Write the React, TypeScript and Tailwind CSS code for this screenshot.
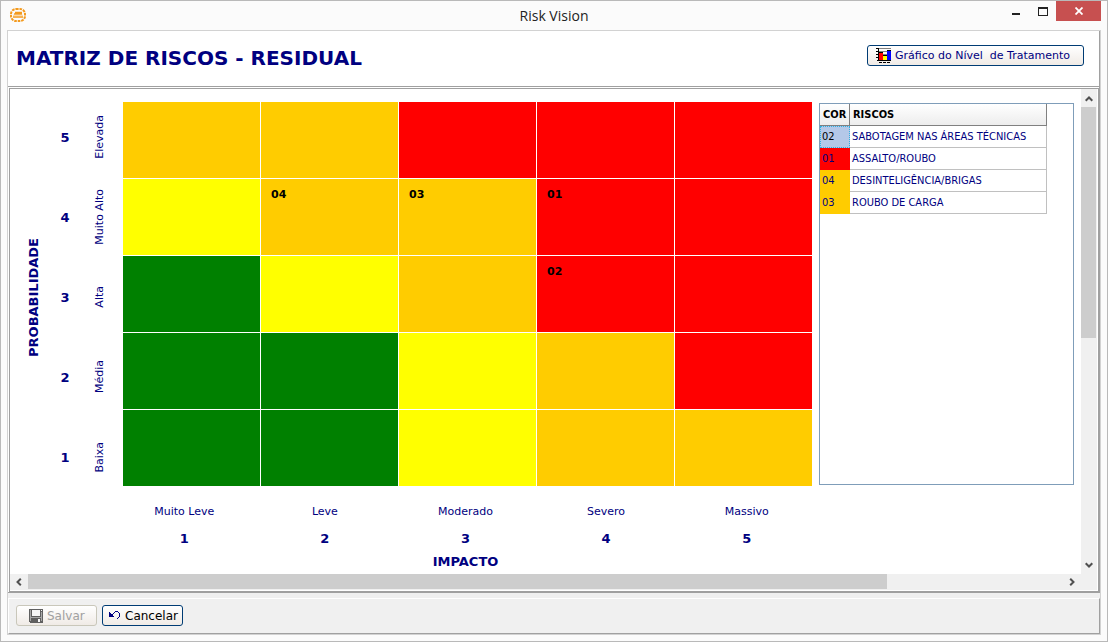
import { useState } from "react";
import clsx from "clsx";

// --------
// Data
// --------

type Level = "green" | "yellow" | "amber" | "red";

const colors: Record<Level, string> = {
  green: "bg-[#008000]",
  yellow: "bg-[#ffff00]",
  amber: "bg-[#ffcc00]",
  red: "bg-[#ff0000]",
};

const matrix: { level: Level; risk?: string }[][] = [
  [{ level: "amber" }, { level: "amber" }, { level: "red" }, { level: "red" }, { level: "red" }],
  [
    { level: "yellow" },
    { level: "amber", risk: "04" },
    { level: "amber", risk: "03" },
    { level: "red", risk: "01" },
    { level: "red" },
  ],
  [{ level: "green" }, { level: "yellow" }, { level: "amber" }, { level: "red", risk: "02" }, { level: "red" }],
  [{ level: "green" }, { level: "green" }, { level: "yellow" }, { level: "amber" }, { level: "red" }],
  [{ level: "green" }, { level: "green" }, { level: "yellow" }, { level: "amber" }, { level: "amber" }],
];

const probability = [
  { value: 5, label: "Elevada" },
  { value: 4, label: "Muito Alto" },
  { value: 3, label: "Alta" },
  { value: 2, label: "Média" },
  { value: 1, label: "Baixa" },
];

const impact = [
  { value: 1, label: "Muito Leve" },
  { value: 2, label: "Leve" },
  { value: 3, label: "Moderado" },
  { value: 4, label: "Severo" },
  { value: 5, label: "Massivo" },
];

const risks: { id: string; name: string; level: Level }[] = [
  { id: "02", name: "SABOTAGEM NAS ÁREAS TÉCNICAS", level: "red" },
  { id: "01", name: "ASSALTO/ROUBO", level: "red" },
  { id: "04", name: "DESINTELIGÊNCIA/BRIGAS", level: "amber" },
  { id: "03", name: "ROUBO DE CARGA", level: "amber" },
];

// --------
// Icons
// --------

const Logo = () => (
  <svg width="16" height="14" viewBox="0 0 16 14" fill="none" stroke="#f39a1e">
    <rect x="1" y="1" width="14" height="12" rx="5" strokeWidth="2" strokeDasharray="2.6 0.9" />
    <path d="M5 4.5h7M4 6h8M3 9h10" strokeWidth="1.4" />
    <path d="M3 7.3h10" stroke="#f9c57c" strokeWidth="0.8" />
  </svg>
);

const ChartIcon = () => (
  <svg width="15" height="15" viewBox="0 0 15 15" shapeRendering="crispEdges">
    <path fill="#808080" d="M2 0h13v1H2zM2 3h13v1H2zM2 6h13v1H2zM2 9h13v1H2z" />
    <path fill="#000" d="M0 0h3v1H0zM0 3h3v1H0zM0 6h3v1H0zM0 9h3v1H0zM1 12h14v1H1zM2 0h1v13H2zM3 14h3v1H3zM7 14h3v1H7zM11 14h3v1h-3z" />
    <path fill="#000" d="M3 4h4v1H3zM7 7h4v1H7zM11 2h4v1h-4z" />
    <path fill="#ff0000" d="M3 5h4v7H3z" />
    <path fill="#ffff00" d="M7 8h4v4H7z" />
    <path fill="#0000ff" d="M11 3h4v9h-4z" />
  </svg>
);

const SaveIcon = () => (
  <svg width="14" height="14" viewBox="0 0 14 14" shapeRendering="crispEdges">
    <path fill="#606060" d="M0 0h14v14H1l-1-1z" />
    <path fill="#f8f8f8" d="M3 1h8v6H3zM12 1h1v1h-1z" />
    <path fill="#a8a8a8" d="M1 1h1v11H1zM12 3h1v9h-1zM2 8h10v1H2z" />
    <path fill="#f8f8f8" d="M9 10h2v3H9z" />
  </svg>
);

const UndoIcon = () => (
  <svg width="12" height="9" viewBox="0 0 12 9" shapeRendering="crispEdges" fill="#000080">
    <path d="M0 1h1v5H0zM1 2h1v4H1zM2 3h1v3H2zM3 4h1v2H3zM4 5h1v1H4zM3 3h1v1H3zM4 2h1v1H4zM5 1h1v1H5zM6 0h3v1H6zM9 1h1v1H9zM10 2h1v4h-1zM9 6h1v1H9zM8 7h1v1H8z" />
  </svg>
);

const Chevron = ({ className }: { className?: string }) => (
  <svg width="8" height="8" viewBox="0 0 8 8" className={className} fill="none" stroke="#505050" strokeWidth="2">
    <path d="M0.7 5.8 4 2.5 7.3 5.8" />
  </svg>
);

// --------
// Window parts
// --------

const TitleBar = () => (
  <header className="grid h-[29px] grid-cols-[1fr_auto_1fr] items-start">
    <div className="pt-[7px] pl-[3px]">
      <Logo />
    </div>
    <h1 className="pt-[5px] font-['Open_Sans',sans-serif] text-sm leading-5 text-[#222]">Risk Vision</h1>
    <div className="flex justify-end">
      <button aria-label="Minimizar" className="flex h-5 w-[27px] items-center justify-center pt-1.5">
        <span className="h-0.5 w-2 bg-[#222]" />
      </button>
      <button aria-label="Maximizar" className="flex h-5 w-[27px] items-center justify-center">
        <span className="h-[9px] w-2.5 border border-t-2 border-[#222]" />
      </button>
      <button aria-label="Fechar" className="flex h-5 w-[45px] items-center justify-center bg-[#c75050]">
        <svg width="8" height="8" viewBox="0 0 8 8" stroke="#fff" strokeWidth="1.8">
          <path d="M0.5 0.5l7 7M7.5 0.5l-7 7" />
        </svg>
      </button>
    </div>
  </header>
);

const YAxis = () => (
  <div className="flex shrink-0 pt-2 text-[#000080]">
    <div className="flex h-[400px] w-12 items-center justify-center">
      <span className="rotate-180 text-[13px] leading-4 font-bold [writing-mode:vertical-rl]">PROBABILIDADE</span>
    </div>
    <div className="grid h-[400px] w-14 grid-rows-5">
      {probability.map((p) => (
        <div key={p.value} className="flex items-center gap-5">
          <span className="w-3.5 pt-0.5 text-center text-[13px] leading-4 font-bold">{p.value}</span>
          <span className="rotate-180 text-[11px] leading-4 [writing-mode:vertical-rl]">{p.label}</span>
        </div>
      ))}
    </div>
  </div>
);

const Matrix = () => (
  <div className="min-w-0 flex-1 pt-[13px] text-[#000080]">
    <div className="grid grid-cols-5 gap-px pr-[7px] pl-[9px]">
      {matrix.flat().map((cell, i) => (
        <div key={i} className={clsx("h-[76px] px-2.5 pt-2 text-[11px] leading-4 font-bold text-black", colors[cell.level])}>
          {cell.risk}
        </div>
      ))}
    </div>
    <div className="mt-[18px] grid grid-cols-5 pr-0.5 text-center">
      {impact.map((item) => (
        <div key={item.value}>
          <p className="text-[11px] leading-4">{item.label}</p>
          <p className="mt-[11px] text-[13px] leading-4 font-bold">{item.value}</p>
        </div>
      ))}
    </div>
    <p className="mt-[7px] pr-0.5 text-center text-[13px] leading-4 font-bold">IMPACTO</p>
  </div>
);

const RiskList = () => {
  const [selected, setSelected] = useState("02");

  return (
    <div className="mt-3.5 mr-[7px] h-[382px] w-[255px] shrink-0 border border-[#7f9db9] bg-white">
      <table className="w-[227px] table-fixed border-separate border-spacing-0 text-left font-['DejaVu_Sans_Condensed','DejaVu_Sans',sans-serif] text-[11px] leading-4">
        <thead>
          <tr className="h-[22px] bg-linear-to-b from-white to-[#ececec] text-black">
            <th className="w-[30px] border-r border-b border-[#808080] px-[3px]">COR</th>
            <th className="border-r border-b border-[#808080] px-[3px]">RISCOS</th>
          </tr>
        </thead>
        <tbody>
          {risks.map((risk) => (
            <tr key={risk.id} className="h-[22px] text-[#000080]" onClick={() => setSelected(risk.id)}>
              <td
                className={clsx(
                  risk.id === selected
                    ? "border border-dotted border-[#30b0e0] bg-[#b4c8e8] px-px text-black"
                    : ["px-0.5", colors[risk.level]],
                )}
              >
                {risk.id}
              </td>
              <td className="border-r border-b border-[#c0c0c0] px-0.5 whitespace-nowrap">{risk.name}</td>
            </tr>
          ))}
        </tbody>
      </table>
    </div>
  );
};

const VerticalBar = () => (
  <div className="flex w-4 shrink-0 flex-col bg-[#f0f0f0]">
    <button aria-label="Rolar para cima" className="flex h-[18px] items-center justify-center pt-0.5">
      <Chevron />
    </button>
    <div className="flex-1">
      <div className="h-[231px] w-[15px] bg-[#cdcdcd]" />
    </div>
    <button aria-label="Rolar para baixo" className="flex h-[18px] items-center justify-center">
      <Chevron className="rotate-180" />
    </button>
  </div>
);

const HorizontalBar = () => (
  <div className="flex h-4 shrink-0 bg-[#f0f0f0] pr-4">
    <button aria-label="Rolar para a esquerda" className="flex w-[18px] items-center justify-center">
      <Chevron className="-rotate-90" />
    </button>
    <div className="flex-1">
      <div className="h-[15px] w-[83%] bg-[#cdcdcd]" />
    </div>
    <button aria-label="Rolar para a direita" className="flex w-[18px] items-center justify-center">
      <Chevron className="rotate-90" />
    </button>
  </div>
);

const buttonStyle =
  "flex h-[21px] items-center rounded-[3px] border bg-linear-to-b from-white to-[#f0ebe6] leading-4 whitespace-pre";

const App = () => {
  return (
    <div className="flex min-h-screen flex-col border border-[#b9b9b9] bg-[#fbfbfb] px-1.5 pb-1.5 font-['DejaVu_Sans',sans-serif]">
      <TitleBar />
      <main className="flex flex-1 flex-col border border-[#d2d2d2] bg-[#f0f0f0]">
        <div className="flex h-14 items-center justify-between border-r border-b border-[#a0a0a0] bg-white pr-[15px] pb-1.5 pl-2">
          <h2 className="pt-1 text-[20px] leading-6 font-bold text-[#000080]">MATRIZ DE RISCOS - RESIDUAL</h2>
          <button className={clsx(buttonStyle, "w-[217px] gap-1 border-[#003c74] pl-2 text-[11px] text-[#000080]")}>
            <ChartIcon />
            {"Gráfico do Nível  de Tratamento"}
          </button>
        </div>

        <div className="flex flex-1 flex-col border-r border-b border-[#a0a0a0] bg-white pt-px pl-px">
          <div className="flex flex-1 flex-col border border-[#a0a0a0] pr-px pb-px">
            <div className="flex flex-1">
              <div className="flex min-w-0 flex-1 overflow-hidden">
                <YAxis />
                <Matrix />
                <RiskList />
              </div>
              <VerticalBar />
            </div>
            <HorizontalBar />
          </div>
        </div>

        <footer className="mt-[5px] flex gap-[5px] border border-t-white border-r-[#a0a0a0] border-b-[#a0a0a0] border-l-white px-[7px] pt-1.5 pb-[7px]">
          <button disabled className={clsx(buttonStyle, "w-[81px] gap-1 border-[#c9c7ba] pl-3 text-[12px] text-[#a0a0a0]")}>
            <SaveIcon />
            Salvar
          </button>
          <button className={clsx(buttonStyle, "w-[81px] gap-1 border-[#003c74] pl-1.5 text-[12px] text-black")}>
            <UndoIcon />
            Cancelar
          </button>
        </footer>
      </main>
    </div>
  );
};

export default App;
